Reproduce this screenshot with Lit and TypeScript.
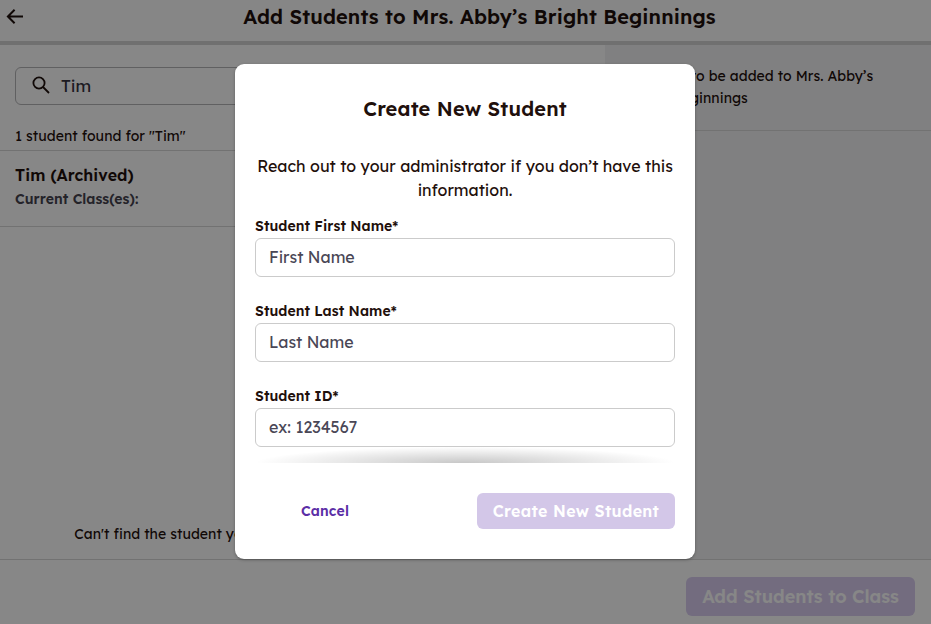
import { LitElement, html, css } from "lit";
import { customElement } from "lit/decorators.js";

@customElement("app-root")
export class AppRoot extends LitElement {
  static styles = css`
    :host { display: block; width: 931px; height: 624px; position: relative; overflow: hidden; background: #fff; font-family: "Lexend", "Lato", "Noto Sans", sans-serif; color: #1f100c; }
    * { box-sizing: border-box; }
    .page { height: 100%; display: flex; flex-direction: column; }
    .header { height: 45px; flex: none; display: flex; align-items: flex-start; justify-content: center; position: relative; border-bottom: 4px solid #d4d4d4; padding: 4px 0 0 28px; background: #fdfdfd; }
    .back { position: absolute; left: 6px; top: 8px; width: 18px; height: 18px; }
    .title { font-size: 20px; line-height: 26px; font-weight: 600; letter-spacing: 0.14px; }
    .body { flex: 1; display: flex; min-height: 0; }
    .left { width: 605px; flex: none; display: flex; flex-direction: column; background: #fff; }
    .search { margin: 22px 0 0 15px; width: 400px; height: 38px; border: 1px solid #b5b5b8; border-radius: 6px; display: flex; align-items: center; padding: 0 0 2px 15px; gap: 10px; font-size: 17px; color: #37333f; }
    .search svg { width: 20px; height: 20px; flex: none; }
    .count { margin: 21px 0 0 15px; font-size: 14px; line-height: 20px; letter-spacing: 0.05px; }
    .student { margin-top: 4px; height: 77px; border-top: 1px solid #d8d8d8; border-bottom: 1px solid #d8d8d8; padding: 13px 15px; }
    .name { font-size: 16px; line-height: 22px; font-weight: 600; letter-spacing: 0.08px; }
    .cls { font-size: 14px; line-height: 20px; font-weight: 600; color: #45434f; margin-top: 3px; letter-spacing: 0.06px; }
    .cant { margin-top: auto; margin-bottom: 15px; padding-right: 2px; text-align: center; font-size: 14px; line-height: 20px; letter-spacing: 0.05px; }
    .right { flex: 1; background: #f1f2f4; }
    .added { height: 86px; padding: 20px 20px 0 21px; border-bottom: 1px solid #d8d8d8; font-size: 14px; line-height: 22px; letter-spacing: 0.05px; }
    .footer { height: 65px; flex: none; border-top: 1px solid #d8d8d8; display: flex; justify-content: flex-end; padding: 17px 16px 0 0; background: #fff; }
    .primary { border: 0; border-radius: 6px; background: #d3c7e8; color: #fff; font: inherit; font-weight: 600; font-size: 18px; white-space: nowrap; padding: 0; }
    .footer .primary { width: 229px; height: 39px; background: #d9cdf0; }
    .scrim { position: absolute; inset: 0; padding: 0 1px 1px 0; background: rgba(0,0,0,.47); display: grid; place-items: center; }
    .modal { width: 460px; height: 495px; background: #fff; border-radius: 9px; padding: 32px 20px 0; display: flex; flex-direction: column; box-shadow: 0 1px 3px rgba(0,0,0,.3); }
    h2 { margin: 0; text-align: center; font-size: 20px; line-height: 26px; font-weight: 600; letter-spacing: 0.16px; }
    .help { margin: 32px 0 0; text-align: center; font-size: 16px; line-height: 24px; }
    .field { display: flex; flex-direction: column; margin-bottom: 24px; }
    .fields { margin-top: 14px; }
    label { font-size: 14px; line-height: 20px; font-weight: 600; height: 22px; letter-spacing: 0.05px; }
    .input { height: 39px; border: 1px solid #cbcbcb; border-radius: 6px; padding: 0 0 2px 13px; display: flex; align-items: center; font-size: 16px; color: #4a4756; }
    .shade { height: 16px; margin-top: -24px; background: radial-gradient(50% 100% at 50% 100%, rgba(0,0,0,.22), rgba(0,0,0,0)); flex: none; }
    .actions { display: flex; justify-content: space-between; align-items: center; margin-top: 30px; }
    .cancel { width: 140px; text-align: center; color: #5b2ea6; font-weight: 600; font-size: 14px; letter-spacing: 0.15px; }
    .actions .primary { width: 198px; height: 36px; font-size: 16px; letter-spacing: 0.33px; }
  `;

  render() {
    return html`
      <div class="page">
        <div class="header">
          <svg class="back" viewBox="0 0 18 18" fill="none" stroke="#1f100c" stroke-width="2"><path d="M17 8.5H2.4M8.6 1.7 1.9 8.5 8.6 15.3"/></svg>
          <div class="title">Add Students to Mrs. Abby’s Bright Beginnings</div>
        </div>
        <div class="body">
          <div class="left">
            <div class="search">
              <svg viewBox="0 0 20 20" fill="none" stroke="#1f100c" stroke-width="1.8"><circle cx="8" cy="8" r="5.6"/><path d="M12 12l6 6"/></svg>
              <span>Tim</span>
            </div>
            <div class="count">1 student found for "Tim"</div>
            <div class="student">
              <div class="name">Tim (Archived)</div>
              <div class="cls">Current Class(es):</div>
            </div>
            <div class="cant">Can't find the student you're looking for? Create New Student here</div>
          </div>
          <div class="right">
            <div class="added">Students to be added to Mrs. Abby’s Bright Beginnings</div>
          </div>
        </div>
        <div class="footer"><button class="primary">Add Students to Class</button></div>
      </div>
      <div class="scrim">
        <div class="modal">
          <h2>Create New Student</h2>
          <p class="help">Reach out to your administrator if you don’t have this information.</p>
          <div class="fields">
            <div class="field"><label>Student First Name*</label><div class="input">First Name</div></div>
            <div class="field"><label>Student Last Name*</label><div class="input">Last Name</div></div>
            <div class="field"><label>Student ID*</label><div class="input">ex: 1234567</div></div>
          </div>
          <div class="shade"></div>
          <div class="actions">
            <div class="cancel">Cancel</div>
            <button class="primary">Create New Student</button>
          </div>
        </div>
      </div>
    `;
  }
}
